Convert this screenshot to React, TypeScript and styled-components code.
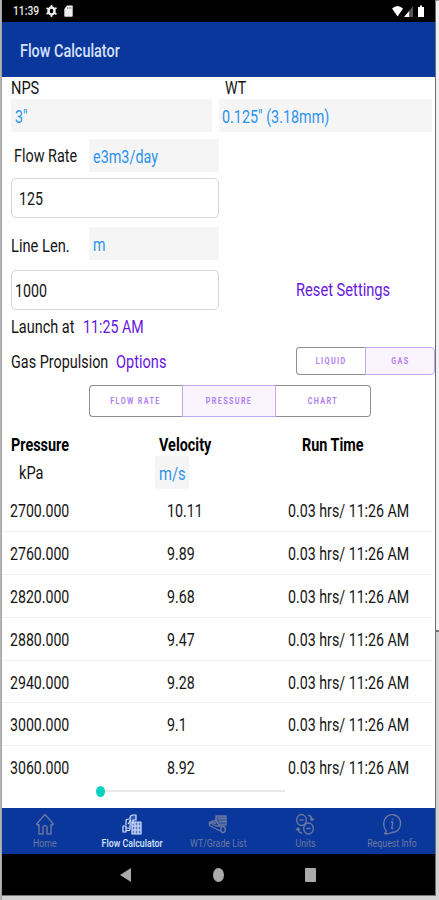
import React from "react";
import styled, { createGlobalStyle, css } from "styled-components";

const Global = createGlobalStyle`
  * { box-sizing: border-box; }
  html, body { margin: 0; background: #d2d2d2; }
  body { font-family: Roboto, sans-serif; }
`;

const blue = "#0a379b";
const purple = "#6617df";
const link = "#2d93ee";

const Stage = styled.div`
  width: 439px; height: 900px; display: flex; overflow: hidden;
  background: linear-gradient(90deg, #b5b5b5 0 1px, #a2a2a2 1px 2px, transparent 2px);
`;
const Device = styled.div`
  width: 433px; height: 896px; margin-left: 2px; flex: none;
  display: flex; flex-direction: column; background: #fff;
  border-bottom: 1px solid #777;
`;
const Edge = styled.div`
  width: 4px; height: 896px; display: flex; flex-direction: column;
`;
const EdgePart = styled.div<{ $h: number; $lower?: boolean }>`
  height: ${(p) => p.$h}px;
  border-left: 1px solid #6d6d6d;
  background: ${(p) => (p.$lower ? "#d2d2d2" : "#f1f1f1")};
  border-top: ${(p) => (p.$lower ? "2px solid #777" : "1px solid #999")};
`;

const Text = styled.span<{ $size?: number; $x?: number; $color?: string; $weight?: number; $track?: number; $center?: boolean }>`
  display: inline-block; flex: none; white-space: nowrap;
  font-size: ${(p) => p.$size ?? 18}px;
  line-height: 22px;
  font-weight: ${(p) => p.$weight ?? 400};
  letter-spacing: ${(p) => p.$track ?? 0}px;
  color: ${(p) => p.$color ?? "#151515"};
  transform: scaleX(${(p) => p.$x ?? 0.79});
  transform-origin: ${(p) => (p.$center ? "center" : "left center")};
`;

const StatusBar = styled.div`
  height: 22px; background: #000; display: flex; align-items: center;
  justify-content: space-between; padding: 0 10px 0 11px; flex: none;
`;
const Clock = styled.div`width: 33px; display: flex;`;
const Group = styled.div<{ $gap?: number }>`
  display: flex; align-items: center; gap: ${(p) => p.$gap ?? 0}px;
`;
const Header = styled.header`
  height: 55px; background: ${blue}; display: flex; align-items: center;
  padding: 2px 0 0 18px; flex: none;
`;
const Content = styled.main`
  height: 731px; flex: none; display: flex; flex-direction: column;
`;
const Row = styled.div<{ $h: number; $mt?: number; $pl?: number }>`
  display: flex; align-items: center; flex: none;
  height: ${(p) => p.$h}px; margin-top: ${(p) => p.$mt ?? 0}px;
  padding-left: ${(p) => p.$pl ?? 9}px;
`;
const Cell = styled.div<{ $w: number; $pl?: number; $mt?: number }>`
  width: ${(p) => p.$w}px; flex: none; display: flex;
  padding-left: ${(p) => p.$pl ?? 0}px;
  margin-top: ${(p) => p.$mt ?? 0}px;
`;
const Picker = styled.div<{ $w: number; $h?: number; $pl?: number }>`
  width: ${(p) => p.$w}px; height: ${(p) => p.$h ?? 33}px; flex: none;
  padding: 3px 0 0 ${(p) => p.$pl ?? 4}px;
  display: flex; align-items: center; background: #f5f5f5;
`;
const Field = styled.div<{ $mt: number; $pl: number }>`
  width: 208px; height: 40px; margin: ${(p) => p.$mt}px 0 0 9px;
  padding: 2px 0 0 ${(p) => p.$pl}px; flex: none;
  display: flex; align-items: center;
  border: 1px solid #d5d5d5; border-radius: 5px;
`;
const Segments = styled.div`display: flex; flex: none;`;
const Segment = styled.div<{ $w: number; $h: number; $on?: boolean; $pos: "first" | "mid" | "last" }>`
  width: ${(p) => p.$w}px; height: ${(p) => p.$h}px;
  display: flex; align-items: center; justify-content: center;
  border: 1px solid ${(p) => (p.$on ? "#c5a9ef" : "#8f8f8f")};
  ${(p) => p.$pos === "first" && css`border-right: 0; border-radius: 4px 0 0 4px;`}
  ${(p) => p.$pos === "last" && css`border-radius: 0 4px 4px 0;`}
  ${(p) => p.$pos === "last" && !p.$on && css`border-left: 0;`}
  background: ${(p) => (p.$on ? "#faf4ff" : "#fff")};
`;
const Table = styled.div`display: flex; flex-direction: column; margin: -1px 3px 0 0;`;
const DataRow = styled.div`
  height: 42.9px; flex: none; display: flex; align-items: center; padding: 2px 0 0 8px;
  &:first-child { padding-top: 3px; }
  & + & { border-top: 1px solid #f0f0f0; }
`;
const Slider = styled.div`
  display: flex; align-items: center; height: 12px; width: 189px; margin: -3px 0 0 94px;
`;
const Thumb = styled.div`width: 9px; height: 11px; border-radius: 50%; background: #08d1bd;`;
const Track = styled.div`height: 2px; flex: 1; background: #e9e9e9;`;

const TabBar = styled.nav`
  height: 46px; flex: none; background: ${blue};
  display: grid; grid-template-columns: repeat(5, 1fr);
`;
const Tab = styled.div<{ $on?: boolean }>`
  min-width: 0; display: flex; flex-direction: column; align-items: center;
  color: ${(p) => (p.$on ? "#d5e3ff" : "#6b77a0")};
  padding-top: 5px;
  svg { flex: none; margin-bottom: -2px; }
`;
const NavBar = styled.div`
  height: 41px; flex: none; background: #000; display: grid;
  grid-template-columns: 94px 92px 92px; justify-content: center;
  align-items: center; justify-items: center; padding-right: 3px;
`;

const iconProps = { width: 20, height: 22, viewBox: "0 0 20 22", fill: "none", stroke: "currentColor", strokeWidth: 1.4, strokeLinejoin: "round" as const };

const HomeIcon = () => (
  <svg {...iconProps}><path d="M1.500 11 10 1.500 18.500 11 17 12.500 16 11.500V21H12V14.500C12 12 8 12 8 14.500V21H4V11.500L3 12.500Z" /></svg>
);
const FlowIcon = () => (
  <svg {...iconProps} strokeWidth={1.2}>
    <path d="M1 13h3v6H1zM4 15h4M4 17.500h4M4 12V8q0-2 3-2M6 11l3-4" />
    <path d="M8 17V5.500Q8 2 11 2h3v5h-3v4" fill="currentColor" fillOpacity=".2" />
    <path d="M10 9h9v12h-9zM10 13h9M13 9V21M16 9V21M10 17h9" fill="currentColor" fillOpacity=".4" />
  </svg>
);
const GradeIcon = () => (
  <svg {...iconProps}>
    <path d="M8 3h10v9h-7L8 8ZM10 5.500h8M11 8.500h7" fill="currentColor" fillOpacity=".5" />
    <path d="M8 7 1.500 9.500 8 13h5M1.500 10v2.500L12 18M4 9l4 1.500" />
    <ellipse cx="15" cy="16.500" rx="2.300" ry="3" />
  </svg>
);
const UnitsIcon = () => (
  <svg {...iconProps}>
    <ellipse cx="6.500" cy="7" rx="4.800" ry="5.500" /><ellipse cx="13.500" cy="15.500" rx="4.800" ry="5.500" />
    <path d="M4.500 7h4M11.500 15.500h4M13 2.500q4 0 4 5m-2-2 2 2 2-2M7 20q-4 0-4-5m-2 2 2-2 2 2" />
  </svg>
);
const InfoIcon = () => (
  <svg {...iconProps}>
    <path d="M4 17.500C.5 14 1.300 6.500 5 3.500 9 .2 16 1.500 18 7c2 6-1.500 12-7.500 12.300C8 20.500 5 21 2.500 20.500 4 19.500 4.500 18.500 4 17.500Z" />
    <path d="M8.800 9h2l-1 6.500h1.500M10.700 5.500v1.200" />
  </svg>
);

const rows = [
  ["2700.000", "10.11"], ["2760.000", "9.89"], ["2820.000", "9.68"], ["2880.000", "9.47"],
  ["2940.000", "9.28"], ["3000.000", "9.1"], ["3060.000", "8.92"],
];
const tabs = [
  { name: "Home", Icon: HomeIcon }, { name: "Flow Calculator", Icon: FlowIcon, on: true },
  { name: "WT/Grade List", Icon: GradeIcon }, { name: "Units", Icon: UnitsIcon },
  { name: "Request Info", Icon: InfoIcon },
];

const SegmentLabel = ({ children }: { children: string }) => (
  <Text $size={9} $weight={700} $track={1.7} $x={0.8} $color="#b07ff3" $center>{children}</Text>
);

export default function App() {
  return (
    <>
      <Global />
      <Stage>
        <Device>
          <StatusBar>
            <Group>
              <Clock><Text $size={13} $weight={500} $color="#e8e8e8">11:39</Text></Clock>
              <Group $gap={7}>
                <svg width="11" height="12" viewBox="0 0 11 12"><ellipse cx="5.500" cy="6" rx="3" ry="3.500" fill="none" stroke="#eee" strokeWidth="2.500" /><path d="M5.500 0v2M5.500 10v2M.5 3l2 1.200M8.500 8l2 1.200M.5 9l2-1.200M8.500 4l2-1.200" stroke="#eee" strokeWidth="1.600" /></svg>
                <svg width="9" height="12" viewBox="0 0 9 12"><path d="M3 .5h5q.7 0 .7.700v9.800q0 .7-.7.700H1q-.7 0-.7-.7V4Z" fill="#eee" /><path d="M3.500 2v2M5.200 2v2M6.900 2v2" stroke="#777" strokeWidth=".7" /></svg>
              </Group>
            </Group>
            <svg width="33" height="13" viewBox="0 0 33 13"><path d="M0 3.500Q5.500-1.500 11 3.500L5.500 11.500Z" fill="#fff" /><path d="M12 12 17.500 5.500V12Z" fill="#fff" /><path d="M17.500 5.500 21 1V12h-3.500Z" fill="#555" /><path d="M26 2h2V.5h2V2h2v10h-6Z" fill="#fff" /></svg>
          </StatusBar>
          <Header><Text $weight={500} $x={0.8} $color="#d7e1fb">Flow Calculator</Text></Header>
          <Content>
            <Row $h={22}>
              <Cell $w={214}><Text $x={0.81}>NPS</Text></Cell><Text>WT</Text>
            </Row>
            <Row $h={33}>
              <Picker $w={201}><Text $color={link}>3"</Text></Picker>
              <Cell $w={7} />
              <Picker $w={213} $pl={3}><Text $color={link} $x={0.797}>0.125" (3.18mm)</Text></Picker>
            </Row>
            <Row $h={33} $mt={7}>
              <Cell $w={78} $pl={3}><Text $x={0.8}>Flow Rate</Text></Cell>
              <Picker $w={130}><Text $color={link} $x={0.8}>e3m3/day</Text></Picker>
            </Row>
            <Field $mt={6} $pl={7}><Text>125</Text></Field>
            <Row $h={33} $mt={9}>
              <Cell $w={78} $mt={4}><Text $x={0.815}>Line Len.</Text></Cell>
              <Picker $w={130}><Text $color={link}>m</Text></Picker>
            </Row>
            <Group>
              <Field $mt={10} $pl={3}><Text>1000</Text></Field>
              <Cell $w={100} $pl={77} $mt={10}><Text $color={purple} $x={0.815}>Reset Settings</Text></Cell>
            </Group>
            <Row $h={34}>
              <Cell $w={72}><Text $x={0.805}>Launch at</Text></Cell><Text $color={purple}>11:25 AM</Text>
            </Row>
            <Row $h={34}>
              <Cell $w={105} $mt={2}><Text $x={0.8}>Gas Propulsion</Text></Cell>
              <Cell $w={180} $mt={2}><Text $color={purple} $x={0.81}>Options</Text></Cell>
              <Segments>
                <Segment $w={69} $h={28} $pos="first"><SegmentLabel>LIQUID</SegmentLabel></Segment>
                <Segment $w={70} $h={28} $pos="last" $on><SegmentLabel>GAS</SegmentLabel></Segment>
              </Segments>
            </Row>
            <Row $h={32} $mt={7} $pl={87}>
              <Segments>
                <Segment $w={93} $h={32} $pos="first"><SegmentLabel>FLOW RATE</SegmentLabel></Segment>
                <Segment $w={94} $h={32} $pos="mid" $on><SegmentLabel>PRESSURE</SegmentLabel></Segment>
                <Segment $w={95} $h={32} $pos="last"><SegmentLabel>CHART</SegmentLabel></Segment>
              </Segments>
            </Row>
            <Row $h={22} $mt={17}>
              <Cell $w={148}><Text $weight={700} $x={0.8} $color="#000">Pressure</Text></Cell>
              <Cell $w={143}><Text $weight={700} $x={0.8} $color="#000">Velocity</Text></Cell>
              <Text $weight={700} $x={0.8} $color="#000">Run Time</Text>
            </Row>
            <Row $h={33}>
              <Cell $w={144} $pl={8}><Text $x={0.81}>kPa</Text></Cell>
              <Picker $w={34}><Text $color={link} $x={0.82}>m/s</Text></Picker>
            </Row>
            <Table>
              {rows.map(([pressure, velocity]) => (
                <DataRow key={pressure}>
                  <Cell $w={157}><Text $x={0.785}>{pressure}</Text></Cell>
                  <Cell $w={121}><Text>{velocity}</Text></Cell>
                  <Text>0.03 hrs/ 11:26 AM</Text>
                </DataRow>
              ))}
            </Table>
            <Slider><Thumb /><Track /></Slider>
          </Content>
          <TabBar>
            {tabs.map(({ name, Icon, on }) => (
              <Tab key={name} $on={on}>
                <Icon />
                <Text $size={11} $weight={on ? 500 : 400} $x={0.8} $color="currentColor" $center>{name}</Text>
              </Tab>
            ))}
          </TabBar>
          <NavBar>
            <svg width="11" height="14"><path d="M11 0v14L0 7Z" fill="#aaa" /></svg>
            <svg width="11" height="14"><ellipse cx="5.500" cy="7" rx="5.500" ry="7" fill="#aaa" /></svg>
            <svg width="11" height="14"><rect width="11" height="14" rx="1" fill="#aaa" /></svg>
          </NavBar>
        </Device>
        <Edge><EdgePart $h={630} /><EdgePart $h={266} $lower /></Edge>
      </Stage>
    </>
  );
}
